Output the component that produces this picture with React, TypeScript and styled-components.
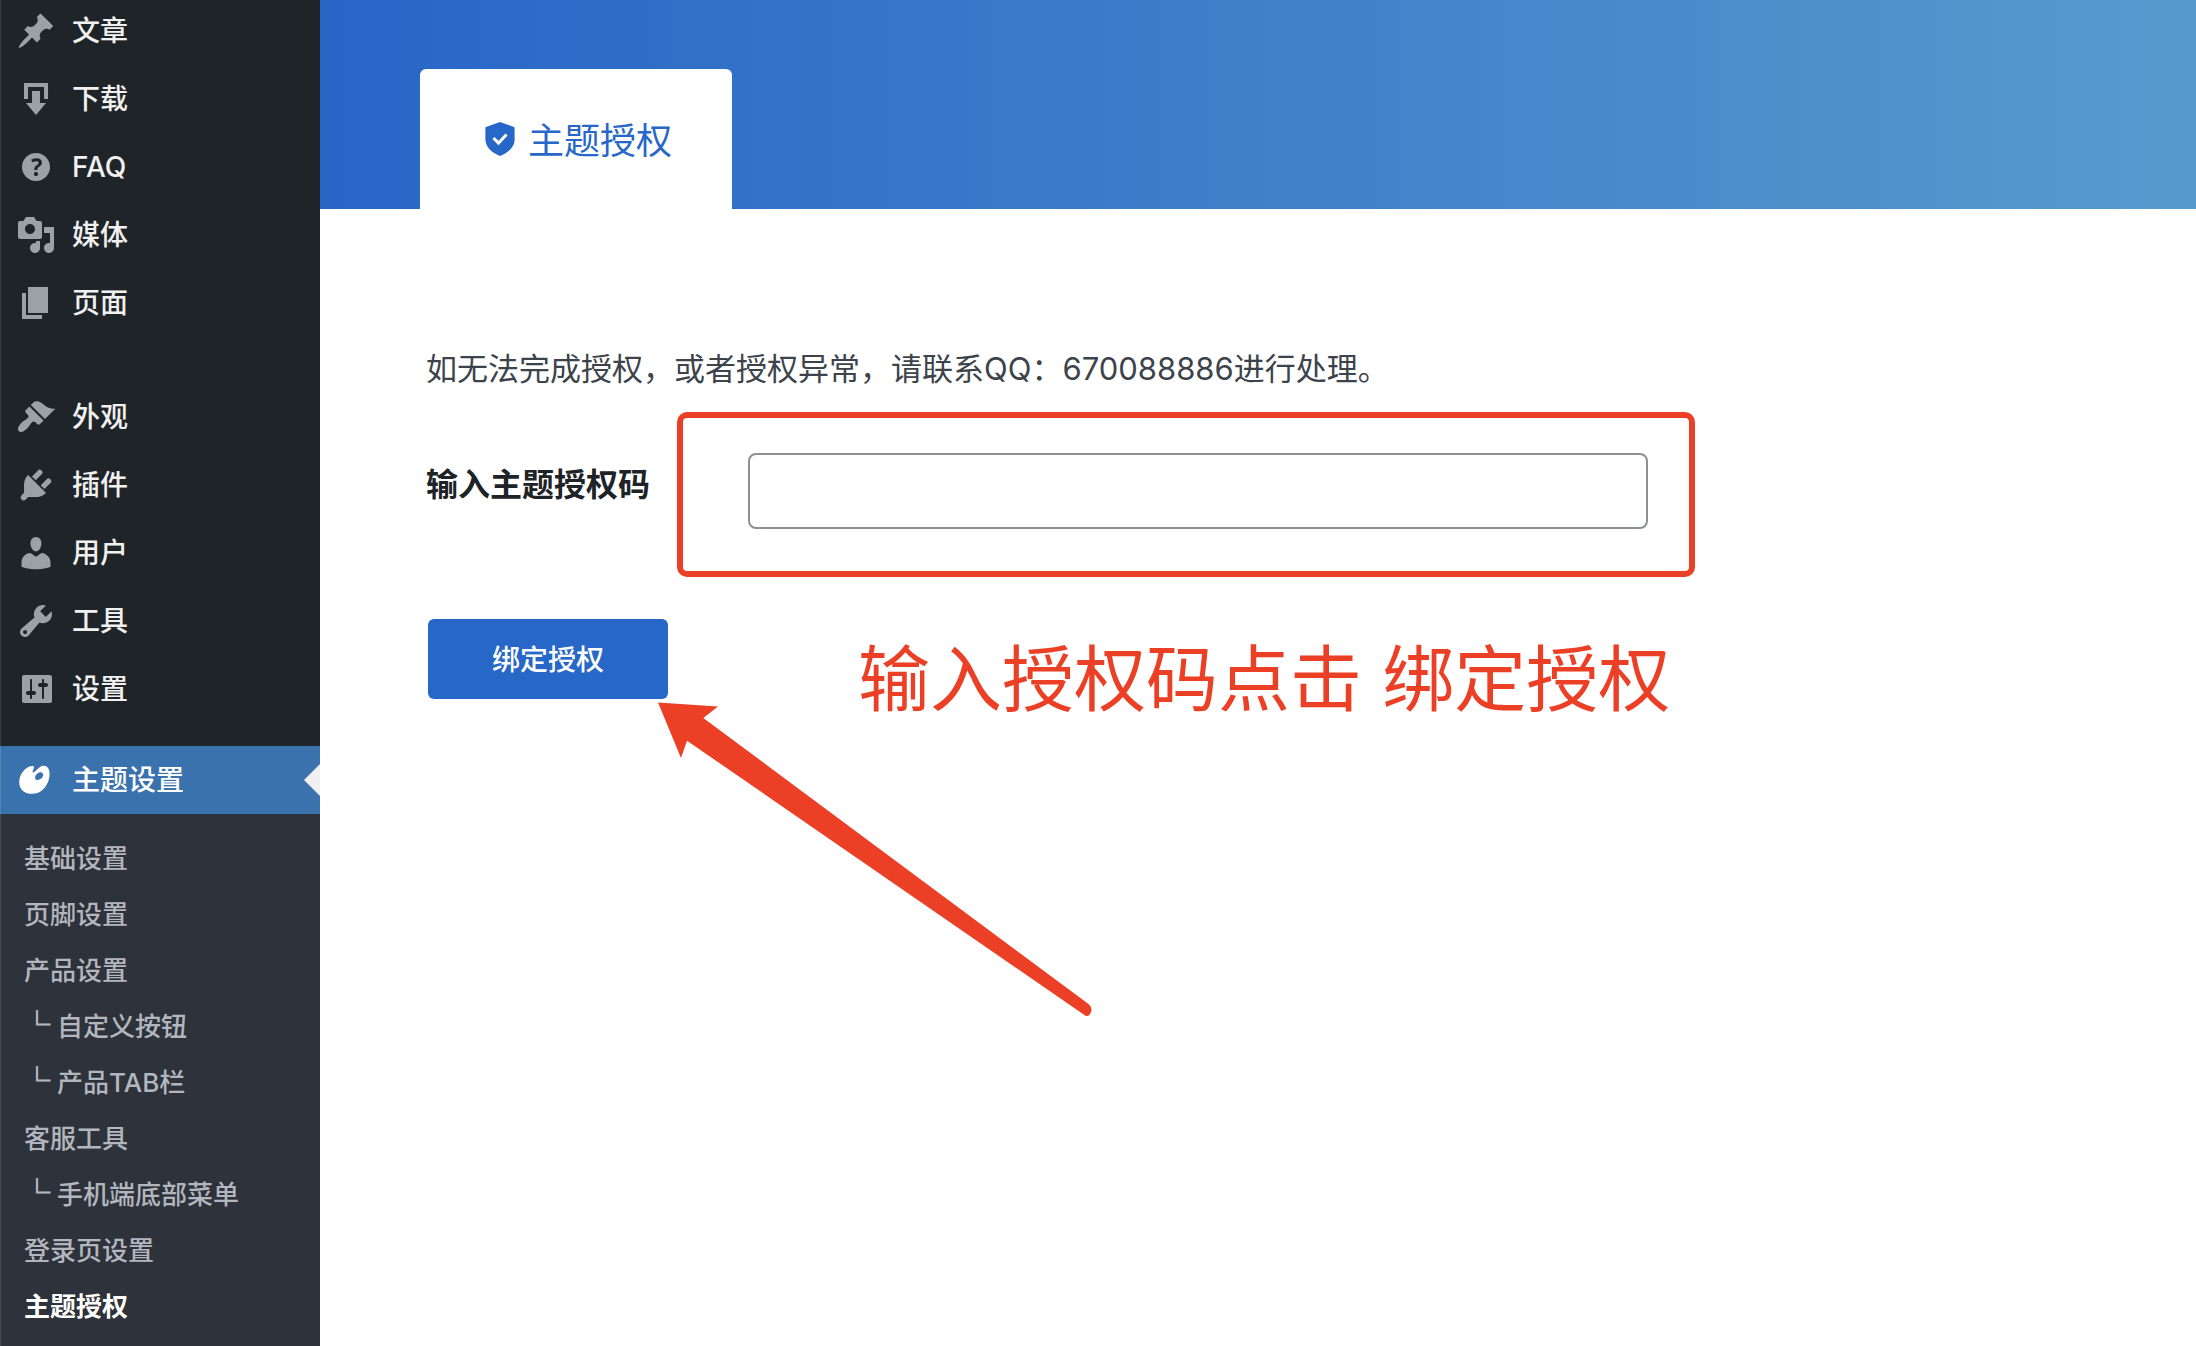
import React from "react";
import styled, { createGlobalStyle } from "styled-components";

const GlobalStyle = createGlobalStyle`
  *, *::before, *::after { box-sizing: border-box; }
  body {
    margin: 0;
    background: #fff;
    color: #3c434a;
    font-family: Inter, "Noto Sans CJK SC", sans-serif;
  }
  ul { margin: 0; padding: 0; list-style: none; }
  a { color: inherit; text-decoration: none; }
`;

const Page = styled.div`
  display: flex;
  min-height: 100vh;
`;

const Sidebar = styled.nav`
  position: relative;
  flex: 0 0 320px;
  height: 100vh;
  overflow: hidden;
  background: #1f2428;

  &::after {
    content: "";
    position: absolute;
    inset: 0 auto 0 0;
    width: 1px;
    background: rgba(255, 255, 255, 0.12);
  }
`;

const Menu = styled.ul`
  display: flex;
  flex-direction: column;
  min-height: calc(100% + 3px);
  margin-top: -3px;
`;

const Separator = styled.li<{ $size: number }>`
  height: ${(p) => p.$size}px;
`;

const MenuLink = styled.a<{ $current?: boolean }>`
  position: relative;
  display: flex;
  align-items: center;
  gap: 16px;
  height: 68px;
  padding-left: 16px;
  font-size: 28px;
  font-weight: 500;
  line-height: 36px;
  color: ${(p) => (p.$current ? "#fff" : "#f0f0f1")};
  background: ${(p) => (p.$current ? "#3a72ad" : "transparent")};

  svg {
    width: 40px;
    height: 40px;
    fill: ${(p) => (p.$current ? "#fff" : "#9ca1a5")};
  }

  &::after {
    content: "";
    display: ${(p) => (p.$current ? "block" : "none")};
    position: absolute;
    right: 0;
    top: 18px;
    border: 16px solid transparent;
    border-left-width: 0;
    border-right-color: #f0f0f1;
  }
`;

const CurrentItem = styled.li`
  display: flex;
  flex: 1;
  flex-direction: column;
`;

const SubMenu = styled.ul`
  flex: 1;
  padding: 17px 0 10px;
  background: #2e323a;
`;

const SubLink = styled.a<{ $current?: boolean }>`
  display: flex;
  gap: 7px;
  height: 56px;
  padding: 10px 24px;
  font-size: 26px;
  line-height: 36px;
  font-weight: ${(p) => (p.$current ? 700 : 500)};
  color: ${(p) => (p.$current ? "#fff" : "#b2b6bf")};
`;

const Branch = styled.span`
  font-family: "Noto Sans CJK SC", sans-serif;
  line-height: 28px;
  -webkit-text-stroke: 1px currentColor;
`;

const Main = styled.main`
  position: relative;
  flex: 1;
  min-width: 0;
`;

const Banner = styled.header`
  display: flex;
  padding: 69px 100px 0;
  background: linear-gradient(90deg, #2765c7 0%, #569bcd 100%);
`;

const Tab = styled.a`
  display: flex;
  align-items: center;
  gap: 13px;
  height: 140px;
  padding: 4px 60px 0 65px;
  border-radius: 6px 6px 0 0;
  background: #fff;
  color: #2767c7;
  font-size: 36px;
  line-height: 52px;

  svg {
    width: 30px;
    height: 34px;
    margin-bottom: 4px;
  }
`;

const Form = styled.form`
  padding: 138px 106px 0;
`;

const Notice = styled.p`
  margin: 0;
  font-size: 31px;
  line-height: 44px;
`;

const FieldRow = styled.div`
  display: flex;
  align-items: flex-start;
  gap: 27px;
  margin-top: 21px;
`;

const FieldLabel = styled.label`
  padding-top: 50px;
  font-size: 32px;
  line-height: 46px;
  font-weight: 700;
  color: #1d2327;
`;

const Highlight = styled.div`
  padding: 35px 41px 42px 65px;
  border: 6px solid #ec4026;
  border-radius: 10px;
`;

const CodeInput = styled.input`
  display: block;
  width: 900px;
  max-width: 100%;
  height: 76px;
  padding: 0 16px;
  border: 2px solid #8c8f94;
  border-radius: 8px;
  background: #fff;
  color: #2c3338;
  font: inherit;
  font-size: 28px;
`;

const ActionRow = styled.div`
  display: flex;
  align-items: flex-start;
  gap: 190px;
  margin-top: 42px;
  padding-left: 2px;
`;

const SubmitButton = styled.button`
  width: 240px;
  height: 80px;
  padding: 2px 0 0;
  border: 0;
  border-radius: 6px;
  background: #2767c7;
  color: #fff;
  font: inherit;
  font-size: 28px;
  font-weight: 500;
  line-height: 36px;
`;

const Hint = styled.p`
  margin: 8px 0 0;
  font-size: 72px;
  line-height: 104px;
  color: #ec4026;
`;

const Arrow = styled.svg`
  position: absolute;
  left: 336px;
  top: 700px;
  width: 440px;
  height: 320px;
  fill: #ec4026;
`;

const ICONS = {
  post: "M10.44 3.02l1.82-1.82 6.36 6.35-1.83 1.82c-1.05-.68-2.48-.57-3.41.36l-.75.75c-.92.93-1.04 2.35-.35 3.41l-1.83 1.82-2.41-2.41-2.8 2.79c-.42.42-3.38 2.71-3.8 2.29s1.86-3.39 2.28-3.81l2.79-2.79L4.1 9.36l1.83-1.82c1.05.69 2.48.57 3.4-.36l.75-.75c.93-.92 1.05-2.35.36-3.41z",
  download: "M14.01 4v6h2V2H4v8h2.01V4h8zm-2 2v6h3l-5 6-5-6h3V6h4z",
  help: "M17 10c0-3.87-3.14-7-7-7-3.87 0-7 3.13-7 7s3.13 7 7 7c3.86 0 7-3.13 7-7zm-6.3 1.48H9.14v-.43c0-.38.08-.7.24-.98s.46-.57.88-.89c.41-.29.68-.53.81-.71.14-.18.2-.39.2-.62 0-.25-.09-.44-.28-.58-.19-.13-.45-.19-.79-.19-.58 0-1.25.19-2 .57l-.64-1.28c.87-.49 1.8-.74 2.77-.74.81 0 1.45.2 1.92.58.48.39.71.91.71 1.55 0 .43-.09.8-.29 1.11-.19.32-.57.67-1.11 1.06-.38.28-.61.49-.71.63-.1.15-.15.34-.15.57v.35zm-1.47 2.74c-.18-.17-.27-.42-.27-.73 0-.33.08-.58.26-.75s.43-.25.77-.25c.32 0 .57.09.75.26s.27.42.27.74c0 .3-.09.55-.27.72-.18.18-.43.27-.75.27-.33 0-.58-.09-.76-.26z",
  media: "M13 11V4c0-.55-.45-1-1-1h-1.67L9 1H5L3.67 3H2c-.55 0-1 .45-1 1v7c0 .55.45 1 1 1h10c.55 0 1-.45 1-1zM7 4.5c1.38 0 2.5 1.12 2.5 2.5S8.38 9.5 7 9.5 4.5 8.38 4.5 7 5.62 4.5 7 4.5zM14 6h5v10.5c0 1.38-1.12 2.5-2.5 2.5S14 17.88 14 16.5s1.12-2.5 2.5-2.5c.17 0 .34.02.5.05V9h-3V6zm-4 8.05V13h2v3.5c0 1.38-1.12 2.5-2.5 2.5S7 17.88 7 16.5 8.12 14 9.5 14c.17 0 .34.02.5.05z",
  page: "M6 15V2h10v13H6zm-1 1h8v2H3V5h2v11z",
  appearance: "M14.48 11.06L7.41 3.99l1.5-1.5c.5-.56 2.3-.47 3.51.32 1.21.8 1.43 1.28 2.91 2.1 1.18.64 2.45 1.26 4.45.85zm-.71.71L6.7 4.7 4.93 6.47c-.39.39-.39 1.02 0 1.41l1.06 1.06c.39.39.39 1.03 0 1.42-.6.6-1.43 1.11-2.21 1.69-.35.26-.7.53-1.01.84C1.43 14.23.4 16.08 1.4 17.07c.99 1 2.84-.03 4.18-1.36.31-.31.58-.66.85-1.02.57-.78 1.08-1.61 1.69-2.21.39-.39 1.02-.39 1.41 0l1.06 1.06c.39.39 1.02.39 1.41 0z",
  plugins: "M13.11 4.36L9.87 7.6 8 5.73l3.24-3.24c.35-.34 1.05-.2 1.56.32.52.51.66 1.21.31 1.55zm-8 1.77l.91-1.12 9.01 9.01-1.19.84c-.71.71-2.63 1.16-3.82 1.16H6.14L4.9 17.26c-.59.59-1.54.59-2.12 0-.59-.58-.59-1.53 0-2.12l1.24-1.24v-3.88c0-1.13.4-3.19 1.09-3.89zm7.26 3.97l3.24-3.24c.34-.35 1.04-.21 1.55.31.52.51.66 1.21.31 1.55l-3.24 3.25z",
  users: "M10 9.25c-2.27 0-2.73-3.44-2.73-3.44C7 4.02 7.82 2 9.97 2c2.16 0 2.98 2.02 2.71 3.81 0 0-.41 3.44-2.68 3.44zm0 2.57L12.72 10c2.39 0 4.52 2.33 4.52 4.53v2.49s-3.65 1.13-7.24 1.13c-3.65 0-7.24-1.13-7.24-1.13v-2.49c0-2.25 1.94-4.48 4.47-4.48z",
  tools: "M16.68 9.77c-1.34 1.34-3.3 1.67-4.95.99l-5.41 6.52c-.99.99-2.59.99-3.58 0s-.99-2.59 0-3.57l6.52-5.42c-.68-1.65-.35-3.61.99-4.95 1.28-1.28 3.12-1.62 4.72-1.06l-2.89 2.89 2.82 2.82 2.86-2.87c.53 1.58.18 3.39-1.08 4.65zM3.81 16.21c.4.39 1.04.39 1.43 0 .4-.4.4-1.04 0-1.43-.39-.4-1.03-.4-1.43 0-.39.39-.39 1.03 0 1.43z",
  settings: "M18 16V4c0-.55-.45-1-1-1H4c-.55 0-1 .45-1 1v12c0 .55.45 1 1 1h13c.55 0 1-.45 1-1zM8 11h1c.55 0 1 .45 1 1s-.45 1-1 1H8v1.5c0 .28-.22.5-.5.5s-.5-.22-.5-.5V13H6c-.55 0-1-.45-1-1s.45-1 1-1h1V5.5c0-.28.22-.5.5-.5s.5.22.5.5V11zm5-2h-1c-.55 0-1-.45-1-1s.45-1 1-1h1V5.5c0-.28.22-.5.5-.5s.5.22.5.5V7h1c.55 0 1 .45 1 1s-.45 1-1 1h-1v5.5c0 .28-.22.5-.5.5s-.5-.22-.5-.5V9z",
  theme: "M8.2 3C4.3 3.3 1.6 7.5 1.6 11.2c0 3.6 2.9 5.7 6.6 5.7 5.5 0 8.6-5.5 8.6-10 0-2.6-1.2-4-3-4-2.200 0-3.200 2.400-5.300 3.500-.6-.9.300-1.700.500-2.500.1-.6-.3-.9-.8-.9zM13.300 6.600c.6.700.3 1.900-.7 2.700s-2.300 1-2.800.3-.2-1.900.8-2.700 2.200-1 2.700-.3z",
};

type IconName = keyof typeof ICONS;

const Icon = ({ name }: { name: IconName }) => (
  <svg viewBox="0 0 20 20" aria-hidden="true">
    <path fillRule="evenodd" d={ICONS[name]} />
  </svg>
);

const contentItems: [IconName, string][] = [
  ["post", "文章"],
  ["download", "下载"],
  ["help", "FAQ"],
  ["media", "媒体"],
  ["page", "页面"],
];

const adminItems: [IconName, string][] = [
  ["appearance", "外观"],
  ["plugins", "插件"],
  ["users", "用户"],
  ["tools", "工具"],
  ["settings", "设置"],
];

const subItems: { label: string; nested?: boolean; current?: boolean }[] = [
  { label: "基础设置" },
  { label: "页脚设置" },
  { label: "产品设置" },
  { label: "自定义按钮", nested: true },
  { label: "产品TAB栏", nested: true },
  { label: "客服工具" },
  { label: "手机端底部菜单", nested: true },
  { label: "登录页设置" },
  { label: "主题授权", current: true },
];

const MenuItems = ({ items }: { items: [IconName, string][] }) => (
  <>
    {items.map(([icon, label]) => (
      <li key={label}>
        <MenuLink href="#">
          <Icon name={icon} />
          {label}
        </MenuLink>
      </li>
    ))}
  </>
);

export default function App() {
  return (
    <Page>
      <GlobalStyle />
      <Sidebar>
        <Menu>
          <MenuItems items={contentItems} />
          <Separator $size={46} role="separator" />
          <MenuItems items={adminItems} />
          <Separator $size={23} role="separator" />
          <CurrentItem>
            <MenuLink href="#" $current>
              <Icon name="theme" />
              主题设置
            </MenuLink>
            <SubMenu>
              {subItems.map((item) => (
                <li key={item.label}>
                  <SubLink href="#" $current={item.current}>
                    {item.nested && <Branch>└</Branch>}
                    {item.label}
                  </SubLink>
                </li>
              ))}
            </SubMenu>
          </CurrentItem>
        </Menu>
      </Sidebar>
      <Main>
        <Banner>
          <Tab href="#">
            <svg viewBox="0 0 30 34" aria-hidden="true">
              <path
                fill="currentColor"
                d="M15 0l14 5c.4.200.600.400.600.900V17c0 8-6 13.500-14.600 17C6.400 30.500.400 25 .4 17V5.900c0-.500.200-.700.600-.9z"
              />
              <path fill="none" stroke="#fff" strokeWidth="3" d="M8.500 16l5 5 8-8.500" />
            </svg>
            主题授权
          </Tab>
        </Banner>
        <Form onSubmit={(e) => e.preventDefault()}>
          <Notice>如无法完成授权，或者授权异常，请联系QQ：670088886进行处理。</Notice>
          <FieldRow>
            <FieldLabel htmlFor="license">输入主题授权码</FieldLabel>
            <Highlight>
              <CodeInput id="license" type="text" />
            </Highlight>
          </FieldRow>
          <ActionRow>
            <SubmitButton type="submit">绑定授权</SubmitButton>
            <Hint>输入授权码点击 绑定授权</Hint>
          </ActionRow>
        </Form>
        <Arrow viewBox="656 700 440 320" aria-hidden="true">
          <path d="M658 702.500L718 706.500L703.300 718L1087.500 1003.300Q1093 1007.500 1090.800 1012.500Q1089 1017 1085.500 1015.800L687 740.700L681 758Z" />
        </Arrow>
      </Main>
    </Page>
  );
}
